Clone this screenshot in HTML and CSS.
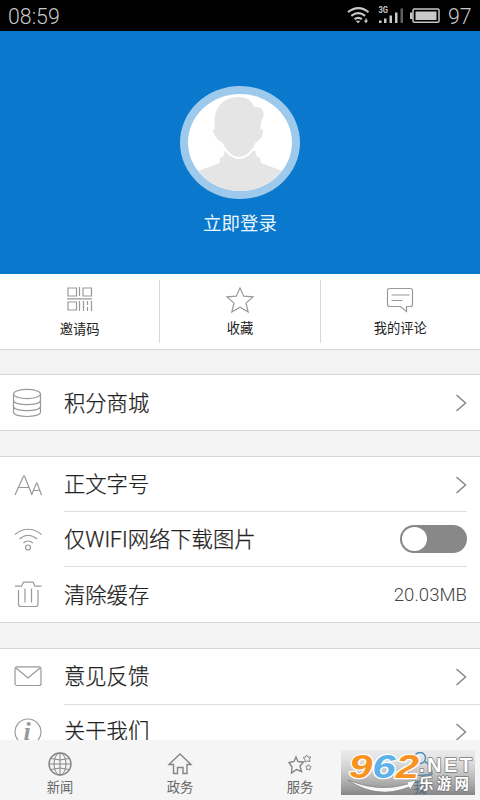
FILE: index.html
```html
<!DOCTYPE html>
<html lang="zh-CN">
<head>
<meta charset="utf-8">
<title>我的</title>
<link rel="stylesheet" href="styles.css">
</head>
<body>
<div class="app">
  <header class="status">
    <span class="clock">08:59</span>
    <svg class="status-icons" width="96" height="31" viewBox="0 0 96 31">
      <g fill="none" stroke="#c8c8c8" stroke-width="2.1">
        <path d="M1 12.2q10.500-8 20.500 0"/><path d="M4.300 15.800q7-5.200 13.800 0"/><path d="M7.500 19.200q3.700-2.600 7.400 0"/>
      </g>
      <path d="M8.500 20.800h5l-2.500 2.400zM16.800 20.500h1.600v-2h1.400v2h1.400l-2.200 2.700z" fill="#c8c8c8"/>
      <text class="net" x="31.500" y="13.300" textLength="9.500" lengthAdjust="spacingAndGlyphs">3G</text>
      <g fill="#c8c8c8"><path d="M32 20.500h2.500v2.500H32zM37 18.500h2.500V23H37zM42.500 15.500H45V23h-2.500zM48 12.500h2.500V23H48z"/><path fill="#606060" d="M53.500 8.500H56V23h-2.500z"/></g>
      <rect x="66" y="9" width="26" height="13.300" rx="1.300" fill="none" stroke="#c8c8c8" stroke-width="1.500"/>
      <path d="M68.500 11.500h21v8.500h-21zM63 12.500h2.500v6.500H63z" fill="#c8c8c8"/>
    </svg>
    <span class="level">97</span>
  </header>

  <section class="profile">
    <svg class="avatar" width="120" height="113" viewBox="0 0 120 113">
      <defs><clipPath id="face"><ellipse cx="60" cy="56.500" rx="52" ry="48.500"/></clipPath></defs>
      <ellipse cx="60" cy="56.500" rx="60" ry="56.500" fill="#9dcaec"/>
      <ellipse cx="60" cy="56.500" rx="52" ry="48.500" fill="#fff"/>
      <g clip-path="url(#face)" fill="#e5e5e5">
        <path d="M15 86l22-8c3-1 3-2 2.500-6 4-1 5-3 5-7h31c0 4 1 6 5 7-.5 4 0 5 3 6l22 8v27H15z"/>
        <path stroke="#fff" stroke-width="2" d="M34 42C31 22 42 10 59 10c8 0 13 3 16 10 9-1 12 8 7.500 15l-1 7c5-1 2 13-5 15-3 8-10 15-17.500 15s-14-7-17.500-15c-7-2-12.500-15-7.500-15z"/>
      </g>
    </svg>
    <span class="login">立即登录</span>
  </section>

  <nav class="actions">
    <a class="action">
      <svg width="26" height="24" viewBox="0 0 26 24"><path d="M1 1h8.500v8H1zM16 1h8.500v8H16zM1 15h8.500v8H1zM12.500 0v9M0 11.800h25M12.500 14v10M16.500 14v10M24.500 14v10M20.500 14v4M20.500 20v4"/></svg>
      <span class="low">邀请码</span>
    </a>
    <a class="action">
      <svg width="28" height="26" viewBox="0 0 28 26"><path d="M14 1l3.700 8.200 9.300.700-7 6.200 2.200 8.900-8.200-4.800L5.800 25 8 16.100 1 9.900l9.300-.7z"/></svg>
      <span>收藏</span>
    </a>
    <a class="action">
      <svg width="28" height="26" viewBox="0 0 28 26"><path d="M3.500 1.500h21q2 0 2 2v14q0 2-2 2h-4v5l-6-5h-11q-2 0-2-2v-14q0-2 2-2zM5.500 8h18M5.500 13.500h11"/></svg>
      <span>我的评论</span>
    </a>
  </nav>

  <main class="list">
    <section class="group">
      <div class="row">
        <svg class="icon" width="30" height="30" viewBox="0 0 30 30"><ellipse cx="15" cy="6" rx="13.500" ry="4.600"/><path d="M1.500 6v18c0 6 27 6 27 0V6M1.500 12.200c0 6 27 6 27 0M1.500 18.200c0 6 27 6 27 0"/></svg>
        <div class="body"><span>积分商城</span><svg class="arrow" width="12" height="18" viewBox="0 0 12 18"><path d="M1.500 1l9 8-9 8"/></svg></div>
      </div>
    </section>
    <section class="group settings">
      <div class="row">
        <svg class="icon" width="30" height="30" viewBox="0 0 30 30"><path d="M3 25L11.500 6h1L20 25M6.500 17.500h10.500M19.500 25L24.500 13h.5L29.500 25M21.500 20.500h7"/></svg>
        <div class="body"><span>正文字号</span><svg class="arrow" width="12" height="18" viewBox="0 0 12 18"><path d="M1.500 1l9 8-9 8"/></svg></div>
      </div>
      <div class="row">
        <svg class="icon" width="30" height="30" viewBox="0 0 30 30"><path d="M3 9.500q13-10.500 26.500 0M7.500 14q8.500-7.500 17.500 0M11.500 18q4.500-4 9.500 0"/><circle cx="16" cy="22.500" r="2.500"/></svg>
        <div class="body"><span>仅WIFI网络下载图片</span><span class="switch"></span></div>
      </div>
      <div class="row">
        <svg class="icon" width="30" height="30" viewBox="0 0 30 30"><path d="M3 6.200h6.500l2-4h9.500l2 4h6.500M6.500 10v14q0 2.500 2.500 2.500h14.500q2.500 0 2.500-2.500V10M13 8.500v14M19.500 8.500v14"/></svg>
        <div class="body"><span>清除缓存</span><span class="size">20.03MB</span></div>
      </div>
    </section>
    <section class="group about">
      <div class="row">
        <svg class="icon" width="30" height="30" viewBox="0 0 30 30"><rect x="3" y="4.800" width="26" height="18.700" rx="2"/><path d="M4 6l12 10L28 6"/></svg>
        <div class="body"><span>意见反馈</span><svg class="arrow" width="12" height="18" viewBox="0 0 12 18"><path d="M1.500 1l9 8-9 8"/></svg></div>
      </div>
      <div class="row">
        <svg class="icon" width="30" height="30" viewBox="0 0 30 30"><circle cx="16" cy="14" r="13"/><text class="info" x="11.500" y="21.500">i</text></svg>
        <div class="body"><span>关于我们</span><svg class="arrow" width="12" height="18" viewBox="0 0 12 18"><path d="M1.500 1l9 8-9 8"/></svg></div>
      </div>
    </section>
  </main>

  <footer class="tabs">
    <a class="tab">
      <svg width="26" height="24" viewBox="0 0 26 24"><circle cx="13" cy="12" r="11"/><g class="thin"><ellipse cx="13" cy="12" rx="6" ry="11"/><path d="M13 1v22M2 12h22M4 6.500q9 3 18 0M4 17.500q9-3 18 0"/></g></svg>
      <span>新闻</span>
    </a>
    <a class="tab">
      <svg width="26" height="24" viewBox="0 0 26 24"><path d="M2 12.500L13 2l11 10.500h-4v9h-4v-6h-5.500v6h-4v-9z"/></svg>
      <span>政务</span>
    </a>
    <a class="tab">
      <svg width="26" height="24" viewBox="0 0 26 24"><path d="M9 5l2 4.500 5.500.500-3.500 4 1.500 5.500-5-2-5 3.500.5-6L2 10.500l5-1z"/><path class="thin" d="M19.500 3l1.200 2h3l-1.500 2.300.8 2.200-2.800-.5-2.200 1V7.200L16 5.500l2.500-.5zM21.500 12.500l.8 1.500 1.700.5-1 1.500v2l-1.800-.8-1.700.3.300-1.800-1-1.400 1.800-.3z"/></svg>
      <span>服务</span>
    </a>
    <a class="tab active">
      <svg width="28" height="24" viewBox="0 0 28 24"><circle cx="14" cy="6" r="5.500"/><path d="M9.500 9.500C4 12 2 15 2 22q12 3 24 0c0-7-2-10-7.500-12.500"/></svg>
      <span>我</span>
    </a>
    <svg class="watermark" width="134" height="45" viewBox="0 0 134 45">
      <defs><linearGradient id="plate" x2="0" y2="1"><stop stop-color="#bbb" stop-opacity=".15"/><stop offset="1" stop-color="#666" stop-opacity=".78"/></linearGradient></defs>
      <rect width="134" height="45" fill="url(#plate)"/>
      <path d="M7 30q31 13 60 4l-2-2 10-2-6 10-1-3Q36 50 7 30z" fill="#f8f8f8" stroke="#777" stroke-width=".6"/>
      <text class="number" y="27.500" textLength="70" lengthAdjust="spacingAndGlyphs" x="8"><tspan fill="#f7931e">9</tspan><tspan fill="#5eb2e8">6</tspan><tspan fill="#f7931e">2</tspan></text>
      <text class="net-name" x="78" y="22" textLength="53" lengthAdjust="spacing">.NET</text>
      <text class="site" x="78" y="39" textLength="50" lengthAdjust="spacing">乐游网</text>
    </svg>
  </footer>
</div>
</body>
</html>
```

FILE: styles.css
```css
* { box-sizing: border-box; }
body {
  margin: 0;
  font-family: Roboto, "Noto Sans CJK SC", sans-serif;
  color: #222;
  background: #f3f3f3;
}
.app {
  width: 480px;
  height: 800px;
  display: flex;
  flex-direction: column;
  overflow: hidden;
}
svg { display: block; flex: none; fill: none; }

.status {
  flex: none;
  height: 31px;
  display: flex;
  align-items: center;
  padding: 2px 8px 0;
  background: #000;
  color: #c8c8c8;
  font-size: 21.300px;
  font-weight: 300;
}
.clock { flex: 1; }
.status-icons { margin: -2px 5px 0 0; }
.net { font: bold 9px Roboto, sans-serif; fill: #c8c8c8; }
.level { width: 24px; }

.profile {
  flex: none;
  height: 243px;
  padding-top: 55px;
  display: flex;
  flex-direction: column;
  align-items: center;
  background: #0a78cc;
}
.login {
  margin-top: 12px;
  font-size: 18.500px;
  line-height: 26px;
  color: #e9f7ff;
}

.actions {
  flex: none;
  height: 76px;
  display: flex;
  background: #fff;
  border-bottom: 1px solid #d6d6d6;
}
.action {
  flex: 1;
  height: 63px;
  margin-top: 6px;
  display: flex;
  flex-direction: column;
  align-items: center;
  justify-content: space-between;
  padding: 7px 0 5px;
  font-size: 13.300px;
  line-height: 18px;
}
.action + .action { border-left: 1px solid #d8d8d8; }
.action svg { stroke: #999; stroke-width: 1.200; }
.low { margin-bottom: -1px; }

.list {
  flex: 1;
  min-height: 0;
  overflow: hidden;
  padding-top: 24px;
  display: flex;
  flex-direction: column;
  gap: 25px;
}
.group {
  flex: none;
  background: #fff;
  border-top: 1px solid #d6d6d6;
  border-bottom: 1px solid #d6d6d6;
}
.row {
  height: 55px;
  display: flex;
  padding: 0 0 0 12px;
}
.about .row:first-child { height: 56px; }
.about .row:last-child { height: 53px; }
.icon { margin-top: 13px; stroke: #999; stroke-width: 1.200; }
.body {
  flex: 1;
  display: flex;
  align-items: center;
  justify-content: space-between;
  margin-left: 22px;
  padding: 1px 13px 0 0;
  font-size: 21.300px;
  font-weight: 300;
  line-height: 52px;
}
.body > span:first-child {
  padding-top: 1px;
  -webkit-text-stroke: .25px currentColor;
}
.about .body { padding-top: 0; }
.about .row:first-child span { padding-top: 0; }
.settings .body { padding-right: 0; margin-right: 13px; }
.row:not(:last-child) .body { border-bottom: 1px solid #dedede; }
.arrow { stroke: #888; stroke-width: 1.500; }
.switch {
  width: 67px;
  height: 28px;
  padding: 2px;
  margin-bottom: 1px;
  border-radius: 14px;
  background: #888;
}
.switch::before {
  content: "";
  display: block;
  width: 25px;
  height: 24px;
  border-radius: 50%;
  background: #fff;
}
.size { font-size: 18.600px; font-weight: 300; color: #444; }
.info { font: italic bold 26px "Liberation Serif", serif; fill: #999; stroke: none; }

.tabs {
  position: relative;
  flex: none;
  height: 60px;
  display: flex;
  background: #f5f5f5;
}
.tab {
  flex: 1;
  display: flex;
  flex-direction: column;
  align-items: center;
  padding-top: 12px;
  font-size: 13.300px;
  line-height: 23px;
  color: #666;
}
.tab svg { stroke: #858585; stroke-width: 1.400; }
.tab .thin { stroke-width: 1; }
.active { color: #0a68ac; }
.tab.active svg { stroke: #2c82bd; }
.tabs .watermark { position: absolute; left: 341px; top: 10px; }
.number, .net-name, .site { paint-order: stroke; stroke-linejoin: round; }
.number { font: italic bold 34px "Liberation Sans", sans-serif; stroke: #fff; stroke-width: 2.500px; }
.net-name { font: bold 20px "Liberation Sans", sans-serif; fill: #fff; stroke: #777; stroke-width: 1.500px; }
.site { font: bold 14.500px "Noto Sans CJK SC", sans-serif; fill: #fff; stroke: #777; stroke-width: 1.500px; }
```
